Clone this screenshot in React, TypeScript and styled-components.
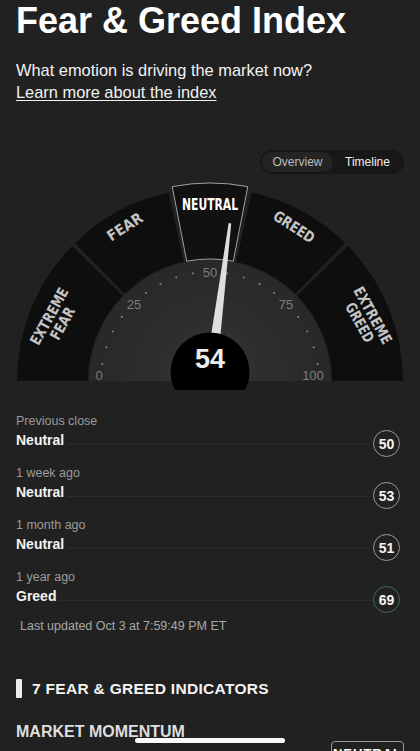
import React from 'react';
import styled, { createGlobalStyle } from 'styled-components';

const GlobalStyle = createGlobalStyle`
    html, body {
        margin:0;
        padding:0;
        background:#212121;
        color:#fff;
        font-family:"Liberation Sans", Arial, sans-serif;
        overflow:hidden;
    }
`;

const Page = styled.div`
    display:flex;
    flex-direction:column;
    padding:0 16px;

    & > * {
        flex-shrink:0;
    }
`;

const Title = styled.h1`
    margin:0;
    padding-top:1px;
    font-size:36px;
    line-height:40px;
    font-weight:700;
    color:#fff;
`;

const Subtitle = styled.p`
    margin:18px 0 0;
    font-size:16.4px;
    line-height:22px;
    color:#f2f2f2;
`;

const LearnLink = styled.a`
    font-size:16.4px;
    line-height:22px;
    color:#f2f2f2;
    text-decoration:underline;
    text-underline-offset:2px;
    text-decoration-thickness:1px;
`;

const ToggleBar = styled.div`
    display:flex;
    justify-content:flex-end;
    margin-top:47px;
`;

const Toggle = styled.div`
    display:flex;
    padding:2px;
    background:#171717;
    border-radius:12px;
`;

const ToggleButton = styled.div<{ $active?: boolean }>`
    display:flex;
    align-items:center;
    justify-content:center;
    width:${p => p.$active ? 71 : 69}px;
    height:20px;
    border-radius:10px;
    font-size:12px;
    color:${p => p.$active ? '#bdbdbd' : '#ececec'};
    background:${p => p.$active ? '#242424' : 'transparent'};
`;

const GaugeSvg = styled.svg`
    display:block;
    margin:4px -16px 0;
`;

const History = styled.div`
    display:flex;
    flex-direction:column;
    gap:6px;
    margin-top:22px;
`;

const HistoryItem = styled.div`
    display:flex;
    flex-direction:column;
`;

const HistoryLabel = styled.div`
    font-size:12.5px;
    line-height:18px;
    color:#9b9b9b;
`;

const HistoryRow = styled.div`
    display:flex;
    align-items:flex-start;
    height:28px;
`;

const HistoryValue = styled.div`
    font-size:14px;
    line-height:20px;
    font-weight:700;
    color:#f4f4f4;
`;

const Dots = styled.div`
    flex:1;
    align-self:center;
    margin:0 1px 0 4px;
    border-bottom:1px dotted #363636;
`;

const ScoreCircle = styled.div<{ $tone: string }>`
    display:flex;
    align-items:center;
    justify-content:center;
    box-sizing:border-box;
    width:27px;
    height:27px;
    margin-right:4px;
    border-radius:50%;
    border:1px solid ${p => p.$tone};
    font-size:14px;
    font-weight:700;
    color:#f4f4f4;
`;

const Updated = styled.div`
    margin-top:3px;
    padding-left:4px;
    font-size:12.5px;
    line-height:18px;
    color:#a8a8a8;
`;

const SectionHead = styled.div`
    display:flex;
    align-items:center;
    gap:10px;
    height:19px;
    margin-top:44px;
`;

const SectionBar = styled.div`
    width:6px;
    height:19px;
    background:#ededed;
    border-radius:1px;
`;

const SectionTitle = styled.h2`
    margin:0;
    font-size:15.5px;
    letter-spacing:0.3px;
    font-weight:700;
    color:#f4f4f4;
`;

const IndicatorTitle = styled.h3`
    margin:24px 0 0;
    font-size:16px;
    line-height:20px;
    font-weight:700;
    color:#dedede;
`;

const BadgeRow = styled.div`
    display:flex;
    justify-content:flex-end;
    margin-top:-1px;
`;

const Badge = styled.div`
    box-sizing:border-box;
    width:73px;
    padding:4px 0;
    text-align:center;
    border:1.5px solid #9a9a9a;
    border-radius:4px;
    font-size:13px;
    font-weight:700;
    letter-spacing:1px;
    color:#fff;
`;

const HomeIndicator = styled.div`
    position:fixed;
    left:135px;
    bottom:8px;
    width:150px;
    height:5px;
    border-radius:3px;
    background:#fafafa;
`;

// gauge geometry: angles measured from the left, over the top
const CX = 210;
const CY = 381;

const pt = (r: number, a: number) => {
    const rad = a * Math.PI / 180;
    return [CX - r * Math.cos(rad), CY - r * Math.sin(rad)];
};

const sector = (r0: number, r1: number, a0: number, a1: number) => {
    const [x0, y0] = pt(r1, a0);
    const [x1, y1] = pt(r1, a1);
    const [x2, y2] = pt(r0, a1);
    const [x3, y3] = pt(r0, a0);
    return `M${x0} ${y0} A${r1} ${r1} 0 0 1 ${x1} ${y1} L${x2} ${y2} A${r0} ${r0} 0 0 0 ${x3} ${y3} Z`;
};

const segments = [
    { a0: 0, a1: 44.4, r1: 193 },
    { a0: 45.6, a1: 77.6, r1: 193 },
    { a0: 102.4, a1: 134.4, r1: 193 },
    { a0: 135.6, a1: 180, r1: 193 },
];

const labels = [
    { x: 56, y: 320, rot: -61, lines: [['EXTREME', 63], ['FEAR', 35]], fill: '#c4c4c4' },
    { x: 125, y: 227, rot: -33, lines: [['FEAR', 39]], fill: '#c4c4c4' },
    { x: 210, y: 205, rot: 0, lines: [['NEUTRAL', 56]], fill: '#ffffff' },
    { x: 294, y: 227, rot: 33, lines: [['GREED', 46]], fill: '#c4c4c4' },
    { x: 366, y: 319, rot: 61, lines: [['EXTREME', 63], ['GREED', 43]], fill: '#c4c4c4' },
];

const tickLabels: { [k: number]: [number, number] } = {
    0: [99, 375],
    25: [134, 304],
    50: [210, 272],
    75: [286, 304],
    100: [313, 375],
};

const Gauge: React.FC<{ value: number }> = ({ value }) => {
    const ticks = [];
    for (let v = 0; v <= 100; v += 5) {
        if (v % 25 === 0) {
            const [x, y] = tickLabels[v];
            ticks.push(
                <text key={v} x={x} y={y} textAnchor="middle" dominantBaseline="central"
                    fontSize="13" fill="#7c7c7c" fontFamily='"Liberation Sans", Arial, sans-serif'>{v}</text>
            );
        } else {
            const [x, y] = pt(109, v * 1.8);
            ticks.push(<circle key={v} cx={x} cy={y} r="1.1" fill="#7a7a7a" />);
        }
    }
    const needleRot = value * 1.8 - 90;

    return (
        <GaugeSvg width="420" height="212" viewBox="0 178 420 212">
            <defs>
                <radialGradient id="glow" cx="210" cy="372" r="110" gradientUnits="userSpaceOnUse">
                    <stop offset="0" stopColor="#3a3a3a" />
                    <stop offset="0.45" stopColor="#2e2e2e" />
                    <stop offset="1" stopColor="#292929" />
                </radialGradient>
            </defs>
            {segments.map((s, i) => (
                <path key={i} d={sector(122, s.r1, s.a0, s.a1)} fill="#0e0e0e" />
            ))}
            <path d={sector(122, 198, 79, 101)} fill="#111111" stroke="#a0a0a0" strokeWidth="1" />
            <path d={`M${CX - 121} ${CY} A121 121 0 0 1 ${CX + 121} ${CY} Z`} fill="url(#glow)" />
            {ticks}
            {labels.map((l, i) => (
                <g key={i} transform={`translate(${l.x} ${l.y}) rotate(${l.rot})`}>
                    {l.lines.map(([t, w], j) => (
                        <text key={j} x="0" y={l.lines.length > 1 ? (j === 0 ? -7.5 : 7.5) : 0}
                            textAnchor="middle" dominantBaseline="central"
                            fontSize="15" fontWeight="700" fill={l.fill}
                            fontFamily='"DejaVu Sans Condensed", "DejaVu Sans", sans-serif'
                            textLength={w as number} lengthAdjust="spacingAndGlyphs">{t}</text>
                    ))}
                </g>
            ))}
            <g transform={`translate(${CX} ${CY}) rotate(${needleRot})`}>
                <polygon points="-6,0 6,0 1.3,-159 -1.3,-159" fill="#dedede" />
            </g>
            <circle cx="210" cy="372" r="39.5" fill="#000" />
            <text x="210" y="359" textAnchor="middle" dominantBaseline="central"
                fontSize="27" fontWeight="700" fill="#ededed"
                fontFamily='"Liberation Sans", Arial, sans-serif'>{value}</text>
        </GaugeSvg>
    );
};

const history = [
    { label: 'Previous close', rating: 'Neutral', score: 50, tone: '#9a9a9a' },
    { label: '1 week ago', rating: 'Neutral', score: 53, tone: '#9a9a9a' },
    { label: '1 month ago', rating: 'Neutral', score: 51, tone: '#9a9a9a' },
    { label: '1 year ago', rating: 'Greed', score: 69, tone: '#3f6e52' },
];

const App: React.FC = () => {
    return (
        <>
            <GlobalStyle />
            <Page>
                <Title>Fear &amp; Greed Index</Title>
                <Subtitle>
                    What emotion is driving the market now?<br />
                    <LearnLink>Learn more about the index</LearnLink>
                </Subtitle>
                <ToggleBar>
                    <Toggle>
                        <ToggleButton $active>Overview</ToggleButton>
                        <ToggleButton>Timeline</ToggleButton>
                    </Toggle>
                </ToggleBar>
                <Gauge value={54} />
                <History>
                    {history.map(h => (
                        <HistoryItem key={h.label}>
                            <HistoryLabel>{h.label}</HistoryLabel>
                            <HistoryRow>
                                <HistoryValue>{h.rating}</HistoryValue>
                                <Dots />
                                <ScoreCircle $tone={h.tone}>{h.score}</ScoreCircle>
                            </HistoryRow>
                        </HistoryItem>
                    ))}
                </History>
                <Updated>Last updated Oct 3 at 7:59:49 PM ET</Updated>
                <SectionHead>
                    <SectionBar />
                    <SectionTitle>7 FEAR &amp; GREED INDICATORS</SectionTitle>
                </SectionHead>
                <IndicatorTitle>MARKET MOMENTUM</IndicatorTitle>
                <BadgeRow>
                    <Badge>NEUTRAL</Badge>
                </BadgeRow>
            </Page>
            <HomeIndicator />
        </>
    );
};

export default App;
